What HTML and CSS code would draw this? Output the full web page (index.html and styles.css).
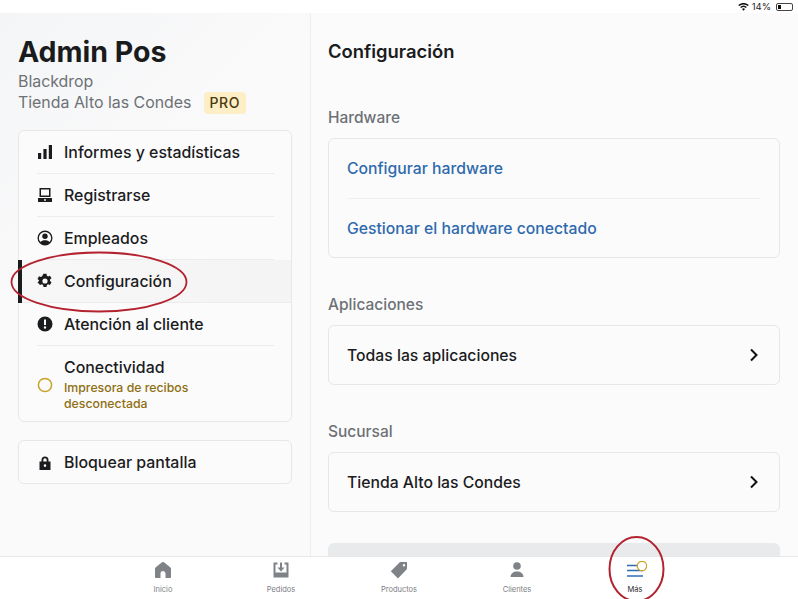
FILE: index.html
```html
<!DOCTYPE html>
<html lang="es">
<head>
  <meta charset="UTF-8" />
  <meta name="viewport" content="width=device-width, initial-scale=1.0"/>
  <title>Admin Pos</title>
  <link rel="stylesheet" href="styles.css">
</head>
<body>
  <div class="app">

    <!-- Barra de estado -->
    <div class="status">
      <svg class="wifi" viewBox="0 0 12 9" width="11" height="8"><path d="M6 8.6 4.3 6.7a2.5 2.5 0 0 1 3.4 0zM3.3 5.7 2.2 4.5a5.6 5.6 0 0 1 7.6 0L8.7 5.7a4 4 0 0 0-5.4 0zM1.2 3.5 0 2.3a8.8 8.8 0 0 1 12 0l-1.200 1.200a7.200 7.200 0 0 0-9.600 0z" fill="#111"/></svg>
      <span>14%</span>
      <span class="battery"><i></i></span>
    </div>

    <div class="content">
      <aside class="sidebar">
        <h1>Admin Pos</h1>
        <div class="sub">Blackdrop</div>
        <div class="sub store">Tienda Alto las Condes <span class="pro">PRO</span></div>

        <div class="card menu">
          <div class="item">
            <svg viewBox="0 0 16 16"><path d="M1 9h3.200v6H1zM6.400 5h3.200v10H6.400zM11.800 1H15v14h-3.200z"/></svg>
            <span>Informes y estadísticas</span>
          </div>
          <div class="item">
            <svg viewBox="0 0 16 16"><path fill-rule="evenodd" d="M2.500 1h11v9h-11zM4 2.500v6h8v-6zM1 11h14v4H1z"/><circle cx="8" cy="13" r=".9" fill="#fff"/></svg>
            <span>Registrarse</span>
          </div>
          <div class="item">
            <svg viewBox="0 0 16 16"><path fill-rule="evenodd" d="M8 .5a7.500 7.500 0 1 1 0 15 7.500 7.500 0 0 1 0-15zM8 2a6 6 0 0 0-4.500 10C4.500 10.800 6 10.300 8 10.300s3.500.5 4.500 1.700A6 6 0 0 0 8 2z"/><circle cx="8" cy="6.300" r="2.700"/></svg>
            <span>Empleados</span>
          </div>
          <div class="item active">
            <svg viewBox="0 0 16 16"><path fill-rule="evenodd" d="M6.500.7h3l.4 2 1.200.7 1.900-.7 1.500 2.600-1.500 1.300v1.400l1.500 1.300-1.500 2.600-1.900-.7-1.200.7-.4 2h-3l-.4-2-1.200-.7-1.900.7L.5 9.300 2 8V7.200L.5 5.900 2 3.300l1.900.7 1.200-.7zM8 5.400a2.600 2.600 0 1 0 0 5.200 2.600 2.600 0 0 0 0-5.200z"/></svg>
            <span>Configuración</span>
          </div>
          <div class="item">
            <svg viewBox="0 0 16 16"><path fill-rule="evenodd" d="M8 .5a7.500 7.500 0 1 1 0 15 7.500 7.500 0 0 1 0-15zM7 3.500v5.500h2V3.500zM8 10.300a1.200 1.200 0 1 0 0 2.400 1.200 1.200 0 0 0 0-2.400z"/></svg>
            <span>Atención al cliente</span>
          </div>
          <div class="item tall">
            <svg viewBox="0 0 16 16"><circle cx="8" cy="8" r="6.600" fill="none" stroke="#c9a227" stroke-width="1.500"/></svg>
            <div>
              <span>Conectividad</span>
              <div class="warn">Impresora de recibos<br>desconectada</div>
            </div>
          </div>
        </div>

        <div class="card lock">
          <div class="item">
            <svg viewBox="0 0 16 16"><path fill-rule="evenodd" d="M4.500 6.500V5a3.500 3.500 0 0 1 7 0v1.500H13.500V15h-11V6.500zM6.300 6.500h3.400V5a1.700 1.700 0 0 0-3.400 0zM8 9.300a1.300 1.300 0 1 0 0 2.600 1.300 1.300 0 0 0 0-2.600z"/></svg>
            <span>Bloquear pantalla</span>
          </div>
        </div>
      </aside>

      <main class="panel">
        <h2>Configuración</h2>

        <h3>Hardware</h3>
        <div class="card list">
          <div class="row link">Configurar hardware</div>
          <div class="row link">Gestionar el hardware conectado</div>
        </div>

        <h3>Aplicaciones</h3>
        <div class="card list">
          <div class="row">Todas las aplicaciones
            <svg class="chev" viewBox="0 0 10 14" width="10" height="14"><path d="M2 1.500 7.500 7 2 12.500" fill="none" stroke="#111" stroke-width="2"/></svg>
          </div>
        </div>

        <h3>Sucursal</h3>
        <div class="card list">
          <div class="row">Tienda Alto las Condes
            <svg class="chev" viewBox="0 0 10 14" width="10" height="14"><path d="M2 1.500 7.500 7 2 12.500" fill="none" stroke="#111" stroke-width="2"/></svg>
          </div>
        </div>

        <div class="gray-btn"></div>
      </main>
    </div>

    <nav class="tabs">
      <div class="tab">
        <svg viewBox="0 0 18 18"><path d="M8 1.300a1.600 1.600 0 0 1 2 0l6.200 4.900q.8.600.8 1.600V16a1 1 0 0 1-1 1h-4.500v-4.500a2.500 2.500 0 0 0-5 0V17H2a1 1 0 0 1-1-1V7.800q0-1 .8-1.600z"/></svg>
        <span>Inicio</span>
      </div>
      <div class="tab">
        <svg viewBox="0 0 18 18"><path fill-rule="evenodd" d="M1.500 1.500h4v2H3.500v8h11v-8h-2v-2h4v15h-15z"/><path d="M8 1.500h2v5h2.500L9 10.500 5.500 6.500H8z"/></svg>
        <span>Pedidos</span>
      </div>
      <div class="tab">
        <svg viewBox="0 0 18 18"><path fill-rule="evenodd" d="M10 1h7v7l-9 9.500L.8 10.300zM14 3a1.200 1.200 0 1 0 0 2.400A1.200 1.200 0 0 0 14 3z"/></svg>
        <span>Productos</span>
      </div>
      <div class="tab">
        <svg viewBox="0 0 18 18"><circle cx="9" cy="5" r="3.800"/><path d="M2.500 16c0-3.500 3-5.500 6.500-5.500s6.500 2 6.500 5.500z"/></svg>
        <span>Clientes</span>
      </div>
      <div class="tab more">
        <svg viewBox="0 0 24 18"><path d="M4 4.500h10M4 9.500h16M4 15h16" stroke="#2f6db0" stroke-width="1.600" fill="none"/><circle cx="19" cy="5" r="4.700" fill="#fff" stroke="#c9a227" stroke-width="1.200"/></svg>
        <span>Más</span>
      </div>
    </nav>

    <!-- Marcas rojas sobre la captura -->
    <svg class="marks" viewBox="0 0 798 599" width="798" height="599">
      <ellipse cx="99" cy="282" rx="87.500" ry="29.500" fill="none" stroke="#b3222f" stroke-width="1.800"/>
      <ellipse cx="636.500" cy="569" rx="27" ry="32" fill="none" stroke="#b3222f" stroke-width="2"/>
    </svg>
  </div>
</body>
</html>
```

FILE: styles.css
```css
* {
  margin: 0;
  padding: 0;
  box-sizing: border-box;
}

body {
  margin: 0;
  overflow: hidden;
  background: #fff;
  font-family: 'Inter', 'Liberation Sans', sans-serif;
}

.app {
  position: relative;
  width: 798px;
  height: 599px;
  display: flex;
  flex-direction: column;
  overflow: hidden;
  color: #1b1c1e;
}

.status {
  height: 13px;
  flex-shrink: 0;
  display: flex;
  align-items: center;
  justify-content: flex-end;
  gap: 3px;
  padding-right: 5px;
  font-size: 9.500px;
  color: #222;
}

.battery {
  width: 17px;
  height: 8px;
  margin-left: 2px;
  border: 1px solid #444;
  border-radius: 2px;
  padding: 1px;
  display: flex;
}

.battery i {
  width: 3px;
  background: #111;
}

.content {
  flex: 1;
  display: flex;
  min-height: 0;
}

.sidebar {
  width: 311px;
  flex-shrink: 0;
  padding: 22px 18px 0;
  background: linear-gradient(135deg, #f4f5f6, #fafafb 40%);
  border-right: 1px solid #ecedee;
}

h1 {
  font-size: 28.500px;
  font-weight: 700;
  line-height: 34px;
  color: #1a1b1d;
  margin-bottom: 2px;
}

.sub {
  font-size: 15.900px;
  line-height: 21px;
  color: #6d7175;
}

.store {
  display: flex;
  align-items: center;
  gap: 12px;
  height: 21px;
}

.pro {
  background: #fdeec6;
  color: #4a3a10;
  font-size: 14px;
  font-weight: 500;
  letter-spacing: 0.6px;
  line-height: 22px;
  padding: 0 6px;
  border-radius: 4px;
}

.card {
  background: #fbfbfc;
  border: 1px solid #e6e7e9;
  border-radius: 6px;
}

.menu {
  position: relative;
  margin-top: 17px;
  height: 292px;
}

.lock {
  margin-top: 18px;
  height: 44px;
}

.item {
  display: flex;
  align-items: center;
  height: 43px;
  margin-left: 18px;
  gap: 11px;
  font-size: 15.900px;
  font-weight: 500;
  border-bottom: 1px solid #ececee;
  position: relative;
}

.item svg {
  width: 16px;
  height: 16px;
  flex-shrink: 0;
  fill: #1b1c1e;
}

.menu .item {
  margin-right: 17px;
}

.menu .item.active {
  background: linear-gradient(to right, #f7f7f8, #f4f4f5);
  margin: 0;
  padding-left: 18px;
}

.item.active::before {
  content: '';
  position: absolute;
  left: -1px;
  top: 0;
  width: 4px;
  height: 43px;
  background: #1b1c1e;
}

.item.tall {
  height: auto;
  padding-top: 12px;
  border-bottom: 0;
}

.item:last-child {
  border-bottom: 0;
}

.warn {
  font-size: 12.300px;
  line-height: 16px;
  color: #8f6f12;
  margin-top: 3px;
}

.panel {
  flex: 1;
  padding: 26px 18px 0 17px;
  background: #fbfbfc;
  overflow: hidden;
}

h2 {
  font-size: 18.400px;
  font-weight: 600;
  line-height: 24px;
  margin-bottom: 44px;
}

h3 {
  font-size: 15.500px;
  font-weight: 500;
  line-height: 22px;
  color: #6d7175;
  margin-bottom: 9px;
}

.list {
  margin-bottom: 36px;
  padding: 0 18px;
}

.row {
  display: flex;
  align-items: center;
  justify-content: space-between;
  height: 60px;
  font-size: 15.750px;
  font-weight: 500;
  border-bottom: 1px solid #f0f0f2;
}

.row:last-child {
  border-bottom: 0;
  height: 58px;
}

.link {
  color: #2f6aad;
}

.chev {
  margin-right: 2px;
}

.gray-btn {
  height: 40px;
  margin-top: -5px;
  background: #e9eaec;
  border-radius: 6px;
}

.tabs {
  height: 43px;
  flex-shrink: 0;
  display: flex;
  justify-content: center;
  background: #fff;
  border-top: 1px solid #e6e7e9;
  position: relative;
}

.tab {
  width: 118px;
  display: flex;
  flex-direction: column;
  align-items: center;
  padding-top: 4px;
  gap: 6px;
  font-size: 7.500px;
  color: #7b7e82;
}

.tab svg {
  width: 18px;
  height: 18px;
  fill: #7f8388;
}

.more {
  color: #2a2b2d;
}

.more svg {
  width: 24px;
}

.marks {
  position: absolute;
  top: 0;
  left: 0;
  pointer-events: none;
}
```
